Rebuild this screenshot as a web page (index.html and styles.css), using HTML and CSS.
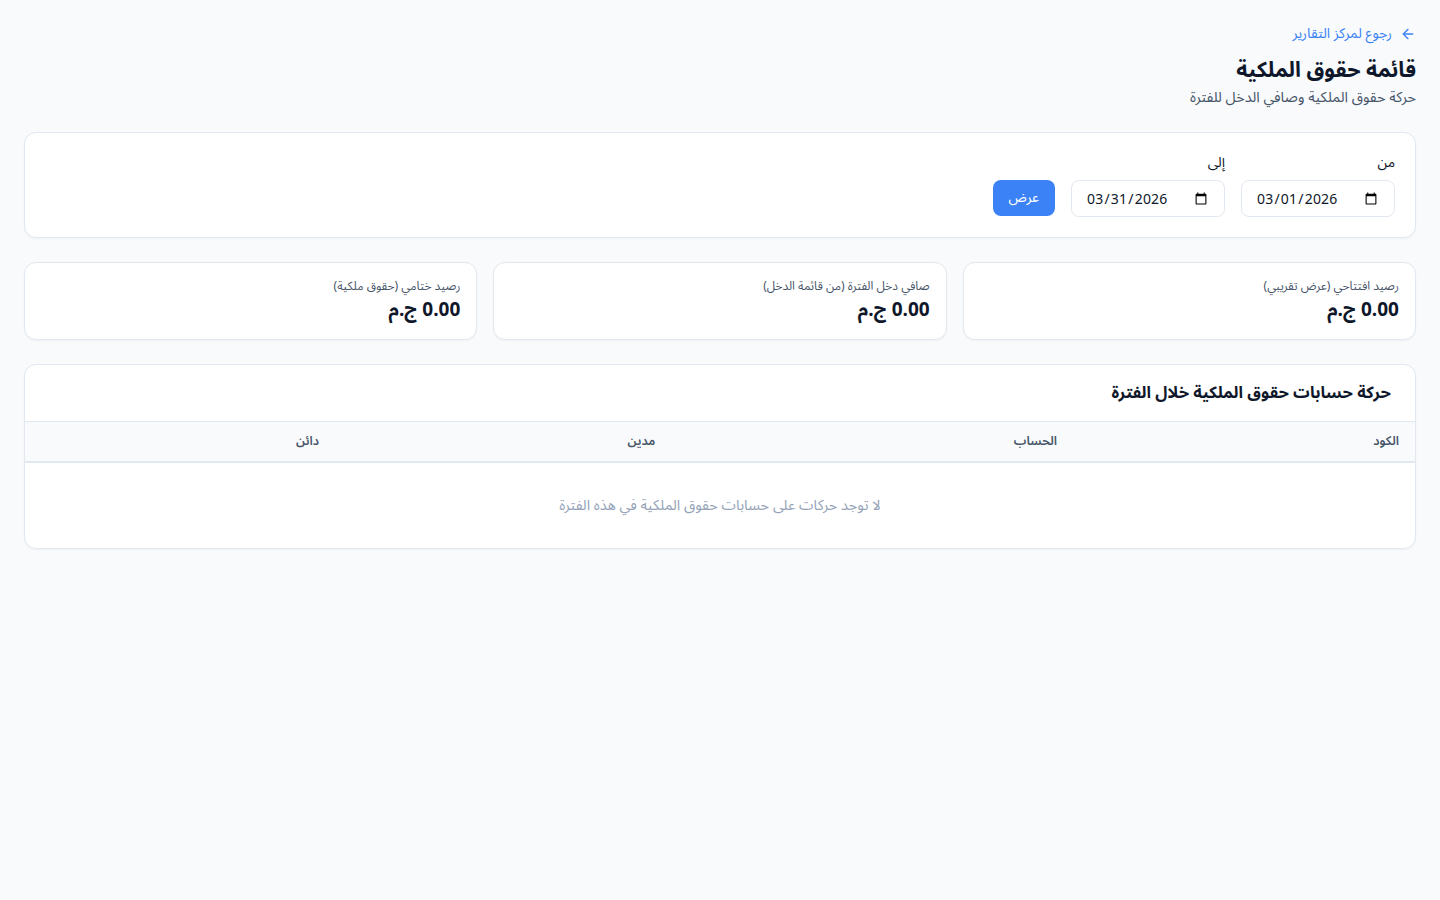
FILE: index.html
```html
<!DOCTYPE html>
<html lang="ar" dir="rtl">
<head>
    <meta charset="UTF-8">
    <title>قائمة حقوق الملكية</title>
    <link rel="stylesheet" href="styles.css">
</head>
<body>
    <main class="page">
        <a class="back-link" href="#">
            <svg width="16" height="16" viewBox="0 0 24 24" fill="none" stroke="currentColor" stroke-width="2" stroke-linecap="round" stroke-linejoin="round">
                <path d="M19 12H5"/>
                <path d="M12 19l-7-7 7-7"/>
            </svg>
            <span>رجوع لمركز التقارير</span>
        </a>

        <h1 class="page-title">قائمة حقوق الملكية</h1>
        <p class="page-subtitle">حركة حقوق الملكية وصافي الدخل للفترة</p>

        <form class="card filter-card" onsubmit="event.preventDefault()">
            <div class="field">
                <label for="from">من</label>
                <input type="date" id="from" value="2026-03-01">
            </div>
            <div class="field">
                <label for="to">إلى</label>
                <input type="date" id="to" value="2026-03-31">
            </div>
            <button type="submit" class="btn-primary">عرض</button>
        </form>

        <section class="stats">
            <div class="card stat">
                <div class="stat-label">رصيد افتتاحي (عرض تقريبي)</div>
                <div class="stat-value">0.00 ج.م</div>
            </div>
            <div class="card stat">
                <div class="stat-label">صافي دخل الفترة (من قائمة الدخل)</div>
                <div class="stat-value">0.00 ج.م</div>
            </div>
            <div class="card stat">
                <div class="stat-label">رصيد ختامي (حقوق ملكية)</div>
                <div class="stat-value">0.00 ج.م</div>
            </div>
        </section>

        <section class="card table-card">
            <h2 class="table-title">حركة حسابات حقوق الملكية خلال الفترة</h2>
            <table class="movements">
                <thead>
                    <tr>
                        <th>الكود</th>
                        <th>الحساب</th>
                        <th>مدين</th>
                        <th>دائن</th>
                    </tr>
                </thead>
                <tbody>
                    <tr>
                        <td colspan="4" class="empty">لا توجد حركات على حسابات حقوق الملكية في هذه الفترة</td>
                    </tr>
                </tbody>
            </table>
        </section>
    </main>
</body>
</html>
```

FILE: styles.css
```css
* {
    box-sizing: border-box;
}

body {
    margin: 0;
    background: #f8fafc;
    color: #0f172a;
    font-family: "Noto Sans Arabic", "Noto Sans", "DejaVu Sans", sans-serif;
    line-height: 20px;
}

.page {
    padding: 24px 24px 40px;
}

.back-link {
    display: flex;
    width: fit-content;
    align-items: center;
    gap: 8px;
    height: 20px;
    color: #3b82f6;
    font-size: 14px;
    line-height: 20px;
    text-decoration: none;
}

.page-title {
    margin: 11px 0 0;
    font-size: 21.5px;
    line-height: 30px;
    font-weight: 700;
    color: #0f172a;
}

.page-subtitle {
    margin: 2px 0 0;
    font-size: 14.5px;
    line-height: 22px;
    color: #475569;
}

.card {
    background: #fff;
    border: 1px solid #e2e8f0;
    border-radius: 12px;
    box-shadow: 0 1px 2px rgba(15, 23, 42, 0.04);
}

/* date filter */
.filter-card {
    margin-top: 23px;
    padding: 20px;
    display: flex;
    align-items: flex-end;
    gap: 16px;
}

.field {
    display: flex;
    flex-direction: column;
    gap: 7px;
}

.field label {
    font-size: 14px;
    line-height: 20px;
    color: #0f172a;
}

.field input {
    direction: ltr;
    width: 154px;
    height: 37px;
    padding: 0 14px;
    border: 1px solid #e2e8f0;
    border-radius: 8px;
    font-family: "Noto Sans", sans-serif;
    font-size: 14px;
    letter-spacing: 0.2px;
    color: #0f172a;
    background: #fff;
}

.btn-primary {
    height: 36px;
    margin-bottom: 1px;
    padding: 0 16px;
    border: none;
    border-radius: 8px;
    background: #3b82f6;
    color: #fff;
    font-family: inherit;
    font-size: 14px;
    line-height: 20px;
    cursor: pointer;
}

/* summary numbers */
.stats {
    margin-top: 24px;
    display: grid;
    grid-template-columns: repeat(3, 1fr);
    gap: 16px;
}

.stat {
    padding: 15px 16px;
    height: 78px;
}

.stat-label {
    font-size: 12px;
    line-height: 18px;
    color: #475569;
}

.stat-value {
    font-size: 19px;
    line-height: 28px;
    font-weight: 700;
    color: #0f172a;
}

/* movements table */
.table-card {
    margin-top: 24px;
    overflow: hidden;
}

.table-title {
    margin: 0;
    padding: 18px 24px;
    font-size: 16.5px;
    line-height: 20px;
    font-weight: 700;
}

.movements {
    width: 100%;
    border-collapse: collapse;
}

.movements th {
    padding: 10px 16px 11px;
    background: #f8fafc;
    border-top: 1px solid #e2e8f0;
    border-bottom: 2px solid #e2e8f0;
    text-align: right;
    font-size: 12.5px;
    line-height: 18px;
    font-weight: 600;
    color: #475569;
}

.movements th:nth-child(1) { width: 24.6%; }
.movements th:nth-child(2) { width: 28.9%; }
.movements th:nth-child(3) { width: 24.2%; }

.movements .empty {
    padding: 32px 16px;
    text-align: center;
    font-size: 14.5px;
    line-height: 21px;
    color: #94a3b8;
}
```
